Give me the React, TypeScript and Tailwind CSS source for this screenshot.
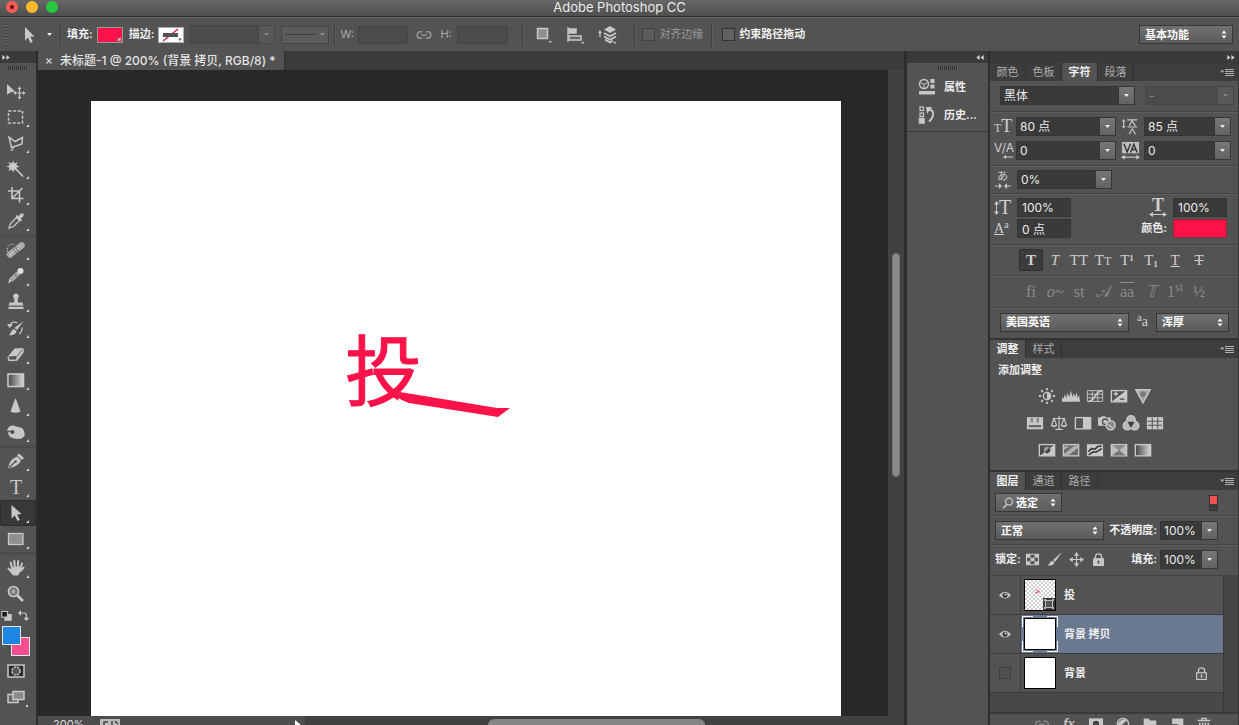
import type { ReactNode } from 'react';
import clsx from 'clsx';

const ICON = '#c8c8c8';

type IconProps = { children: ReactNode; size?: number; className?: string };

// All icons are drawn on a 20x20 grid
const Icon = ({ children, size = 20, className }: IconProps) => (
  <svg
    width={size}
    height={size}
    viewBox="0 0 20 20"
    fill="none"
    stroke={ICON}
    strokeWidth="1.5"
    aria-hidden="true"
    className={clsx('shrink-0', className)}
  >
    {children}
  </svg>
);

const Solid = ({ d }: { d: string }) => <path d={d} fill={ICON} stroke="none" />;

const TOOL_GROUPS: { id: string; label: string; single?: boolean; icon: ReactNode }[][] = [
  [
    {
      id: 'move',
      label: '移动工具',
      single: true,
      icon: (
        <>
          <Solid d="M1 3 L1 14 L4 11.500 L9 10.500 Z" />
          <path d="M13.500 7 V17 M8.500 12 H18.500" strokeWidth="1.200" />
          <Solid d="M13.500 5.500 L15.500 8 H11.500 Z M13.500 18.500 L15.500 16 H11.500 Z M7.500 12 L10 10 V14 Z M19.500 12 L17 10 V14 Z" />
        </>
      ),
    },
    {
      id: 'marquee',
      label: '矩形选框工具',
      icon: <rect x="2.500" y="4" width="14" height="12" strokeDasharray="3 1.700" />,
    },
    {
      id: 'lasso',
      label: '多边形套索工具',
      icon: (
        <>
          <path d="M3 4 L9 8.500 L16.500 4.500 L16 11 L5.500 14.500 Z" />
          <path d="M5.500 14.500 C8 13.500 8 17 4.500 17.500" strokeWidth="1.200" />
        </>
      ),
    },
    {
      id: 'wand',
      label: '魔棒工具',
      icon: (
        <>
          <Solid d="M7 1.500 L8.300 4.500 L11.500 3 L10.300 6.200 L13.500 7.500 L10.300 8.800 L11.500 12 L8.300 10.500 L7 13.500 L5.700 10.500 L2.500 12 L3.700 8.800 L0.500 7.500 L3.700 6.200 L2.500 3 L5.700 4.500 Z" />
          <path d="M10 10 L17 17.500" strokeWidth="1.800" />
        </>
      ),
    },
    {
      id: 'crop',
      label: '裁剪工具',
      icon: <path d="M6 2 V13.500 H17.500 M2 6 H13.500 V17.500 M6 13.500 L16.500 3" strokeWidth="1.600" />,
    },
    {
      id: 'eyedropper',
      label: '吸管工具',
      icon: (
        <>
          <path d="M3 17 L4.500 12.500 L10.500 6.500 L13.500 9.500 L7.500 15.500 Z" strokeWidth="1.300" />
          <Solid d="M9.500 5 L11 4 L12.500 5.200 L14.500 2.800 Q16 1.500 17.300 2.800 Q18.500 4 17.200 5.500 L14.800 7.500 L16 9 L14.800 10.500 Z" />
        </>
      ),
    },
  ],
  [
    {
      id: 'heal',
      label: '污点修复画笔工具',
      icon: (
        <>
          <path d="M2 15 C-1 7 4 2 9 5" strokeWidth="1" strokeDasharray="1.500 1.300" />
          <path d="M4 14.500 L15.500 5.500" strokeWidth="6.500" stroke="#aaaaaa" strokeLinecap="round" />
          <path d="M7.500 9 L11 13.500 M9.500 7.300 L13 12" strokeWidth="1" stroke="#555" />
          <path d="M4 14.500 L15.500 5.500" strokeWidth="1.200" strokeDasharray="1.200 1.800" stroke="#eeeeee" />
        </>
      ),
    },
    {
      id: 'brush',
      label: '画笔工具',
      icon: (
        <>
          <Solid d="M2 17.500 L3.500 12.500 L6 15 Z" />
          <path d="M5 14 L12.500 7" strokeWidth="4.500" stroke="#a8a8a8" />
          <path d="M8.500 8 L12 12" stroke="#555" strokeWidth="0.800" />
          <circle cx="14.500" cy="5" r="3" fill="#e0e0e0" stroke="none" />
        </>
      ),
    },
    {
      id: 'stamp',
      label: '仿制图章工具',
      icon: (
        <Solid d="M10 1.500 C13 1.500 13.500 4.500 12 6.500 C11.500 8 11.500 9 12 10.500 H16.500 L17.500 13.500 H2.500 L3.500 10.500 H8 C8.500 9 8.500 8 8 6.500 C6.500 4.500 7 1.500 10 1.500 Z M2.500 14.800 H17.500 V17 H2.500 Z" />
      ),
    },
    {
      id: 'history-brush',
      label: '历史记录画笔工具',
      icon: (
        <>
          <Solid d="M17.500 3 L11 12 L8.500 10 Z M2.500 17 C5 16.500 4.500 12 8 11 L10.500 13.200 C10 16.500 6 18 2.500 17 Z" />
          <path d="M4 7.500 C5 3.500 9.500 3.500 11.500 5 M16 9.500 C16.500 12 15 15 13 16" strokeWidth="1.300" />
          <Solid d="M1 6 L7 6.500 L3.500 10 Z" />
        </>
      ),
    },
    {
      id: 'eraser',
      label: '橡皮擦工具',
      icon: (
        <>
          <Solid d="M2 12.500 L8.500 4.500 L17 4 L11 12 Z" />
          <path d="M2 12.500 L3 16.500 L11 16 L17 8 V4.500 M11 12.500 V16" strokeWidth="1.300" />
          <Solid d="M11.500 12.500 L17 5 V8.500 L11.500 15.500 Z" />
        </>
      ),
    },
    {
      id: 'gradient',
      label: '渐变工具',
      icon: (
        <>
          <rect x="2" y="4" width="15.500" height="12.500" fill="url(#toolGradient)" strokeWidth="1.600" />
          <defs>
            <linearGradient id="toolGradient">
              <stop offset="0" stopColor="#444" />
              <stop offset="1" stopColor="#d8d8d8" />
            </linearGradient>
          </defs>
        </>
      ),
    },
    { id: 'sharpen', label: '锐化工具', icon: <Solid d="M9 3 Q9.500 2 10 3 L14.500 15.500 Q9.500 18 4.500 15.500 Z" /> },
    {
      id: 'sponge',
      label: '海绵工具',
      icon: (
        <>
          <Solid d="M1 9 Q2 3.500 7 3.500 L16 6 Q19 9 18.500 14 L15.500 16.500 Q8 18 3.500 14.500 Z" />
          <circle cx="6.500" cy="10" r="2" fill="#505050" stroke="none" />
          <path d="M1 9.500 H6" stroke="#505050" />
        </>
      ),
    },
  ],
  [
    {
      id: 'pen',
      label: '钢笔工具',
      icon: (
        <>
          <Solid d="M2 17.500 Q3 8.500 11 5.500 L15 9.500 Q12.500 15.500 2 17.500 Z M11 4.500 L13 2.500 L18 7 L16 9 Z" />
          <path d="M3 16.500 L9 11" stroke="#505050" strokeWidth="1.200" />
          <circle cx="9.500" cy="10.500" r="1.300" fill="#505050" stroke="none" />
        </>
      ),
    },
    { id: 'type', label: '横排文字工具', icon: null },
    { id: 'path-select', label: '路径选择工具', icon: <Solid d="M5.500 2 V15.500 L8.800 12.500 L11.500 18 L13.800 16.800 L11.200 11.500 L15.500 11 Z" /> },
    {
      id: 'rectangle',
      label: '矩形工具',
      icon: <rect x="2.500" y="4.500" width="14.500" height="11" fill="#8f8f8f" strokeWidth="1.300" />,
    },
  ],
  [
    {
      id: 'hand',
      label: '抓手工具',
      icon: (
        <>
          <Solid d="M5 9.500 L14.500 8.500 L15.500 12 L12 17.500 H7 L4.500 13.500 Z" />
          <path
            d="M2.500 10.500 L6.500 15 M6 10 L4.700 4.500 M8.800 9.500 L8.300 2.800 M11.700 9.500 L12.200 3 M14 11 L16 5.500 M15 12.500 L17.500 9.500"
            strokeWidth="2"
            strokeLinecap="round"
          />
        </>
      ),
    },
    {
      id: 'zoom',
      label: '缩放工具',
      single: true,
      icon: (
        <>
          <circle cx="7.500" cy="7.500" r="5" fill="#777" strokeWidth="1.700" />
          <circle cx="7.500" cy="7.500" r="2" fill="#aaa" stroke="none" />
          <path d="M11.500 11.500 L17 17" strokeWidth="2.600" />
        </>
      ),
    },
  ],
];

const ADJUSTMENTS: { id: string; icon: ReactNode }[][] = [
  [
    {
      id: '亮度/对比度',
      icon: (
        <>
          <circle cx="10" cy="10" r="4" />
          <Solid d="M10 6 A4 4 0 0 1 10 14 Z" />
          <path d="M10 1 V3.500 M10 16.500 V19 M1 10 H3.500 M16.500 10 H19 M3.600 3.600 L5.400 5.400 M14.600 14.600 L16.400 16.400 M3.600 16.400 L5.400 14.600 M14.600 5.400 L16.400 3.600" strokeWidth="2" />
        </>
      ),
    },
    { id: '色阶', icon: <Solid d="M0 16.500 V11 L2 13 L3 8 L5 12 L6 6 L8 11 L10 4 L11.500 11 L13 7 L14.500 11 L16 6 L17.500 12 L19 9 L20 16.500 Z" /> },
    {
      id: '曲线',
      icon: (
        <>
          <path d="M1.500 4 H18.500 V16 H1.500 Z M1.500 8 H18.500 M1.500 12 H18.500 M7 4 V16 M13 4 V16" strokeWidth="1" />
          <path d="M3 16 C11 15 9 5 18 4" strokeWidth="1.800" />
        </>
      ),
    },
    {
      id: '曝光度',
      icon: (
        <>
          <rect x="1.500" y="4" width="17" height="12.500" />
          <Solid d="M2 16 L18 4 V16 Z" />
          <path d="M4 7.500 H9 M6.500 5 V10" />
          <path d="M11 13.500 H16" stroke="#4a4a4a" />
        </>
      ),
    },
    {
      id: '自然饱和度',
      icon: (
        <>
          <path d="M2 3 H18 L10 17.500 Z" fill="#a2a2a2" />
          <circle cx="10" cy="8" r="3" fill="#777" stroke="none" />
        </>
      ),
    },
  ],
  [
    {
      id: '色相/饱和度',
      icon: (
        <>
          <Solid d="M1 3.500 H19 V17 H1 Z" />
          <path d="M6.500 4.500 V9.500 M13 4.500 V9.500" stroke="#8a8a8a" strokeWidth="3" />
          <path d="M3 13.500 H17" stroke="#666" strokeWidth="2.500" />
        </>
      ),
    },
    {
      id: '色彩平衡',
      icon: (
        <>
          <path d="M10 2 V16.500 M6 17 H14 M3 5 H17 M4.500 5 L1.500 13 M4.500 5 L7.500 13 M15.500 5 L12.500 13 M15.500 5 L18.500 13" strokeWidth="1.300" />
          <Solid d="M0.500 12.500 H8.500 Q4.500 17 0.500 12.500 Z M11.500 12.500 H19.500 Q15.500 17 11.500 12.500 Z" />
        </>
      ),
    },
    {
      id: '黑白',
      icon: (
        <>
          <rect x="1.500" y="4" width="17" height="12.500" fill="#555" />
          <Solid d="M10 4 H18.500 V16.500 H10 Z" />
        </>
      ),
    },
    {
      id: '照片滤镜',
      icon: (
        <>
          <Solid d="M0 4 H3 L4 2.500 H8 L9 4 H14 V13 H0 Z" />
          <circle cx="8" cy="8.500" r="3" stroke="#505050" />
          <circle cx="14" cy="12.500" r="5" fill="#8a8a8a" strokeWidth="1.600" />
          <path d="M10.500 11 L16.500 15.500" strokeWidth="1.200" />
        </>
      ),
    },
    {
      id: '通道混合器',
      icon: (
        <>
          <circle cx="10" cy="6.500" r="4.700" fill="#b8b8b8" />
          <circle cx="6" cy="13" r="4.700" fill="#b8b8b8" />
          <circle cx="14" cy="13" r="4.700" fill="#b8b8b8" />
          <path d="M6 8.500 L14 8.500 L10 15.500 Z" fill="#3d3d3d" stroke="none" />
        </>
      ),
    },
    {
      id: '颜色查找',
      icon: (
        <>
          <Solid d="M1 3.500 H19 V17 H1 Z" />
          <path d="M2 8 H18 M2 12.500 H18 M7 4.500 V16 M13 4.500 V16" stroke="#555" strokeWidth="1.200" />
        </>
      ),
    },
  ],
  [
    {
      id: '反相',
      icon: (
        <>
          <rect x="1.500" y="4" width="17" height="12.500" fill="#4a4a4a" />
          <Solid d="M2 16.500 L18.500 4 V16.500 Z" />
          <circle cx="10" cy="10" r="3.500" fill="#999" stroke="none" />
          <path d="M7.500 12.500 A3.500 3.500 0 0 0 12.500 7.500 Z" fill="#444" stroke="none" />
        </>
      ),
    },
    {
      id: '色调分离',
      icon: (
        <>
          <rect x="1.500" y="4" width="17" height="12.500" fill="#6c6c6c" />
          <path d="M2 6 H8 L2 10 Z M2 14.500 L14 5 H18 V7.500 L7 16 H2 Z" fill="#b0b0b0" stroke="none" />
        </>
      ),
    },
    {
      id: '阈值',
      icon: (
        <>
          <Solid d="M1 3.500 H19 V17 H1 Z" />
          <path d="M2.500 12 L6 8.500 L10 9 L13 6 L17.500 5.500 M3 15.500 L8 12 L11 12.500 L17.500 8.500" stroke="#3a3a3a" strokeWidth="1.800" />
        </>
      ),
    },
    {
      id: '可选颜色',
      icon: (
        <>
          <rect x="1.500" y="4" width="17" height="12.500" fill="#bdbdbd" />
          <path d="M2.500 4.500 L10 10.500 L17.500 4.500 Z" fill="#8a8a8a" stroke="none" />
          <path d="M2.500 16 L10 10 L17.500 16 Z" fill="#777" stroke="none" />
        </>
      ),
    },
    {
      id: '渐变映射',
      icon: <rect x="1.500" y="4" width="17" height="12.500" fill="url(#toolGradient)" />,
    },
  ],
];

const LAYERS = [
  { name: '投', visible: true, shape: true },
  { name: '背景 拷贝', visible: true, selected: true },
  { name: '背景', visible: false, locked: true },
];

const TypeTool = () => (
  <span className="w-5 shrink-0 text-center font-['Liberation_Serif',serif] text-xl leading-5 text-[#c8c8c8]">T</span>
);

const DownArrow = () => (
  <svg width="5" height="3" viewBox="0 0 5 3" fill="currentColor" aria-hidden="true" className="shrink-0">
    <path d="M0 0 H5 L2.500 3 Z" />
  </svg>
);

const UpDown = () => (
  <svg width="6" height="9" viewBox="0 0 6 9" fill="currentColor" aria-hidden="true" className="pointer-events-none shrink-0">
    <path d="M0.500 3.500 L3 0.500 L5.500 3.500 Z M0.500 5.500 H5.500 L3 8.500 Z" />
  </svg>
);

// Dark value field with a separate arrow button
const Combo = ({ label, value, className, disabled }: { label: string; value: string; className?: string; disabled?: boolean }) => (
  <div
    className={clsx(
      'flex h-[19px] border',
      disabled ? 'border-[#474747] bg-[#4b4b4b] text-[#858585]' : 'border-[#353535] bg-[#3a3a3a] text-[#ececec]',
      className,
    )}
  >
    <select aria-label={label} disabled={disabled} className="min-w-0 flex-1 appearance-none bg-transparent pl-[3px] text-xs leading-4 outline-none">
      <option>{value}</option>
    </select>
    <span
      className={clsx(
        'flex w-4 shrink-0 items-center justify-center border-l',
        disabled ? 'border-[#474747] bg-[#585858]' : 'border-[#353535] bg-linear-to-b from-[#777] to-[#626262]',
      )}
    >
      <DownArrow />
    </span>
  </div>
);

// Raised pop-up button
const Popup = ({ label, value, className, icon }: { label: string; value: string; className?: string; icon?: ReactNode }) => (
  <div
    className={clsx(
      'flex h-[19px] items-center border border-[#373737] bg-linear-to-b from-[#707070] to-[#5c5c5c] px-[5px] text-white',
      className,
    )}
  >
    {icon}
    <select aria-label={label} className="min-w-0 flex-1 appearance-none bg-transparent text-[11px] leading-4 font-bold outline-none">
      <option>{value}</option>
    </select>
    <UpDown />
  </div>
);

const Field = ({ label, value }: { label: string; value: string }) => (
  <input
    aria-label={label}
    defaultValue={value}
    className="h-[19px] w-[54px] border border-[#353535] bg-[#3a3a3a] px-1 text-xs text-[#ececec] outline-none"
  />
);

const Divider = () => <div className="h-[22px] w-px shrink-0 bg-[#404040] shadow-[1px_0_0_#5d5d5d]" />;

const Grip = () => (
  <div className="mx-auto mt-[3px] h-[4px] w-5 bg-[repeating-linear-gradient(90deg,#333_0_1px,#5a5a5a_1px_2px)]" />
);

const Chevrons = ({ left }: { left?: boolean }) => (
  <svg width="8" height="5" viewBox="0 0 9 6" fill="#d0d0d0" aria-hidden="true">
    <path d={left ? 'M4 0 V6 L0 3 Z M9 0 V6 L5 3 Z' : 'M0 0 V6 L4 3 Z M5 0 V6 L9 3 Z'} />
  </svg>
);

const PanelTabs = ({ tabs, active }: { tabs: string[]; active: string }) => (
  <div role="tablist" className="flex h-[18px] items-stretch bg-[#3d3d3d]">
    {tabs.map((tab) => (
      <button
        key={tab}
        role="tab"
        aria-selected={tab === active}
        className={clsx(
          'w-9 border-r border-[#303030] text-[11px] leading-[18px]',
          tab === active ? 'bg-[#535353] font-bold text-[#f0f0f0]' : 'text-[#adadad]',
        )}
      >
        {tab}
      </button>
    ))}
    <button aria-label="面板菜单" className="mr-1 ml-auto">
      <svg width="14" height="9" viewBox="0 0 14 9" stroke="#b0b0b0" aria-hidden="true">
        <path d="M5 1.500 H14 M5 3.500 H14 M5 5.500 H14 M5 7.500 H14" strokeWidth="1" />
        <path d="M0 2.500 H4.500 L2.200 5 Z" fill="#b0b0b0" stroke="none" />
      </svg>
    </button>
  </div>
);

const TitleBar = () => (
  <header className="relative flex h-[17px] items-center border-b border-[#2e2e2e] bg-linear-to-b from-[#666] to-[#4f4f4f] pb-[3px] pl-[6px]">
    <div className="flex gap-2">
      <button aria-label="关闭" className="flex size-3 items-center justify-center rounded-full bg-[#fc5b57]">
        <span className="size-1 rounded-full bg-[#5c0a0a]" />
      </button>
      <button aria-label="最小化" className="size-3 rounded-full bg-[#fdb92e]" />
      <button aria-label="缩放" className="size-3 rounded-full bg-[#28c940]" />
    </div>
    <h1 className="absolute inset-x-0 top-0 text-center text-[13px] leading-[14px] text-[#ececec]">Adobe Photoshop CC</h1>
  </header>
);

const OptionsBar = () => (
  <div className="flex h-[34px] items-center border-t border-[#6a6a6a] bg-[#535353] pr-[6px] pl-1 text-[11px] font-bold text-[#ededed]">
    <span className="h-[22px] w-[3px] bg-[repeating-linear-gradient(180deg,#3d3d3d_0_1px,#5e5e5e_1px_3px)]" />
    <button aria-label="路径选择工具" className="ml-3 flex items-center gap-2">
      <Icon>
        <Solid d="M6 2 V15.500 L9 12.500 L11.500 18 L13.800 16.800 L11.300 11.800 L15.500 11.500 Z" />
      </Icon>
      <DownArrow />
    </button>
    <div className="ml-2 flex items-center gap-1.5">
      <Divider />
      <span>填充:</span>
    </div>
    <button aria-label="填充颜色" className="ml-1 h-4 w-[26px] border border-[#999] bg-[#fb1248]">
      <svg width="24" height="14" viewBox="0 0 24 14" aria-hidden="true">
        <path d="M18 9 H24 V14 H18 Z" fill="#c9405f" />
        <path d="M19 12.500 H22.500 V9.500 Z" fill="#f0c8d0" />
      </svg>
    </button>
    <span className="ml-1.5">描边:</span>
    <button aria-label="描边颜色" className="ml-1 h-4 w-[26px] border border-[#aaa] bg-white">
      <svg width="24" height="14" viewBox="0 0 24 14" aria-hidden="true">
        <path d="M4 13 L19 1" stroke="#d02340" strokeWidth="1.500" />
        <path d="M4 5 H19 V9 H4 Z" fill="#535353" />
        <path d="M19 10.500 H23 L21 13 Z" fill="#666" />
      </svg>
    </button>
    <Combo label="描边宽度" value="" disabled className="ml-1.5 w-[85px]" />
    <button aria-label="描边类型" className="ml-1.5 flex h-[18px] w-12 items-center gap-1 border border-[#444] bg-[#5b5b5b] px-[3px] text-[#8c8c8c]">
      <span className="h-px flex-1 bg-[#3f3f3f]" />
      <DownArrow />
    </button>
    <div className="ml-[5px] flex items-center gap-[5px] font-normal text-[#aaa]">
      <Divider />
      <label htmlFor="shape-w" className="w-[13px] text-[11px]">W:</label>
      <input id="shape-w" disabled className="h-[18px] w-[50px] border border-[#444] bg-[#4b4b4b]" />
    </div>
    <Icon size={16} className="ml-2">
      <path d="M8 6 H5.500 A4 4 0 0 0 5.500 14 H8 M12 6 H14.500 A4 4 0 0 1 14.500 14 H12 M6.500 10 H13.500" stroke="#999" strokeWidth="1.800" />
    </Icon>
    <label htmlFor="shape-h" className="ml-2 w-[13px] text-[11px] font-normal text-[#aaa]">H:</label>
    <input id="shape-h" disabled className="mr-3.5 ml-1 h-[18px] w-[51px] border border-[#444] bg-[#4b4b4b]" />
    <Divider />
    <div className="mr-4 ml-[11px] flex gap-3">
      <button aria-label="路径操作">
        <Icon>
          <rect x="3.500" y="3.500" width="10" height="10" fill="#8f8f8f" />
          <Solid d="M14.500 16 H18 L16.200 18 Z" />
        </Icon>
      </button>
      <button aria-label="路径对齐方式">
        <Icon>
          <path d="M2 2 V17" strokeWidth="1.400" />
          <path d="M3 4 H10 V8 H3 Z" fill={ICON} />
          <path d="M3 11 H15 V15 H3 Z" fill="#666" />
          <Solid d="M15 17 H18.500 L16.800 19 Z" />
        </Icon>
      </button>
      <button aria-label="路径排列方式">
        <Icon>
          <Solid d="M12 1 L18 4.500 L12 8 L6 4.500 Z" />
          <path d="M6 8 L12 11.200 L18 8 M6 11.500 L12 14.700 L18 11.500 M7 14.500 L12 17.500 L15 15.800" strokeWidth="1.800" />
          <path d="M2 12 V7" strokeWidth="1.300" />
          <Solid d="M0 8 H4 L2 5 Z M15 17 H18.500 L16.800 19 Z" />
        </Icon>
      </button>
    </div>
    <Divider />
    <label className="mr-2 ml-[7px] flex items-center gap-1 font-normal text-[#9a9a9a]">
      <input type="checkbox" disabled className="size-[13px] appearance-none border border-[#3f3f3f] bg-[#5c5c5c]" />
      对齐边缘
    </label>
    <Divider />
    <label className="ml-2.5 flex items-center gap-1">
      <input type="checkbox" className="size-[13px] appearance-none border border-[#333] bg-[#616161]" />
      约束路径拖动
    </label>
    <Popup label="工作区" value="基本功能" className="ml-auto w-[94px]" />
  </div>
);

const Toolbar = () => (
  <aside className="flex w-9 shrink-0 flex-col bg-[#535353]">
    <div className="flex h-[12px] items-center bg-[#3a3a3a] pl-[2px]">
      <Chevrons />
    </div>
    <div className="h-[15px]">
      <Grip />
    </div>
    {TOOL_GROUPS.map((group, i) => (
      <div key={i} className={clsx(i > 0 && 'border-t-[3px] border-double border-[#474747]')}>
        {group.map((tool) => (
          <button
            key={tool.id}
            aria-label={tool.label}
            className={clsx(
              'flex h-[26px] w-full items-center rounded-xs pl-[6px]',
              tool.id === 'path-select' && 'bg-[#383838] shadow-[inset_0_0_0_1px_#2c2c2c]',
            )}
          >
            {tool.icon ? <Icon>{tool.icon}</Icon> : <TypeTool />}
            {!tool.single && (
              <svg width="3" height="3" viewBox="0 0 3 3" className="mb-[3px] self-end" aria-hidden="true">
                <path d="M3 0 V3 H0 Z" fill="#d0d0d0" />
              </svg>
            )}
          </button>
        ))}
      </div>
    ))}
    <div className="flex h-[17px] items-center gap-1">
      <button aria-label="默认前景色和背景色">
        <Icon size={14}>
          <rect x="7" y="8" width="9" height="8" fill={ICON} />
          <rect x="2.500" y="3.500" width="8" height="8" fill="#1c1c1c" />
        </Icon>
      </button>
      <button aria-label="切换前景色和背景色">
        <Icon size={12}>
          <path d="M4 5 H10 Q14 5 14 9 V15" strokeWidth="2" />
          <Solid d="M5 0 V10 L0 5 Z M9 13 H19 L14 18.500 Z" />
        </Icon>
      </button>
    </div>
    <div className="grid h-[34px] w-[30px] shrink-0 self-start pt-[2px] pb-[2px] pl-[2px]">
      <button aria-label="背景色" className="col-start-1 row-start-1 size-[19px] self-end justify-self-end border border-[#e8e8e8] bg-[#f4508f]" />
      <button aria-label="前景色" className="z-10 col-start-1 row-start-1 size-[19px] border border-[#e8e8e8] bg-[#1c86e2]" />
    </div>
    <button aria-label="以快速蒙版模式编辑" className="flex h-[26px] items-center pl-[6px]">
      <Icon>
        <rect x="2" y="4" width="16" height="12" fill="#2d2d2d" />
        <circle cx="10" cy="10" r="4" fill="#555" strokeDasharray="2.200 1" />
      </Icon>
    </button>
    <button aria-label="更改屏幕模式" className="flex h-[26px] items-center pl-[6px]">
      <Icon>
        <rect x="2" y="7.500" width="10" height="8" fill="#666" />
        <rect x="7" y="4.500" width="11" height="8" fill="#8a8a8a" />
      </Icon>
      <span className="mb-[3px] size-[2px] self-end bg-[#d0d0d0]" />
    </button>
  </aside>
);

const Canvas = () => (
  <div className="flex min-h-0 flex-1 bg-[#282828]">
    <div className="flex min-w-0 flex-1 pt-[31px] pr-[47px] pl-[53px]">
      <div className="relative flex-1 bg-white">
        {/* Artwork: glyph with its last stroke pulled out to the right */}
        <svg width="180" height="140" viewBox="0 0 180 140" fill="#fb1248" className="absolute top-[196px] left-[250px]" role="img" aria-label="投">
          <text x="4" y="103" fontSize="77" fontWeight="400" stroke="#fb1248" strokeWidth="1" fontFamily="'Noto Sans CJK SC', sans-serif">投</text>
          <path d="M57 101 L67 105 L84 108 V117 H60 Z" fill="#fff" />
          <path d="M59 95 L156 111 H169 L157 120 L68 106 Q61 104 55 99 Z" />
        </svg>
      </div>
    </div>
    <div className="w-4 shrink-0 bg-[#414141] px-1 pt-[183px]">
      <div className="h-[224px] rounded-full border border-[#777] bg-[#8a8a8a]" />
    </div>
  </div>
);

const DocumentArea = () => (
  <main className="flex min-w-0 flex-1 flex-col border-r-3 border-l-2 border-[#2d2d2d] bg-[#3b3b3b]">
    <div className="flex h-[19px] shrink-0">
      <div className="flex items-center gap-[7px] border-r border-[#303030] bg-[#535353] pr-2 pl-[7px] text-[#e4e4e4]">
        <button aria-label="关闭文档">
          <svg width="8" height="8" viewBox="0 0 8 8" stroke="#d0d0d0" aria-hidden="true">
            <path d="M1.500 1.500 L6.500 6.500 M6.500 1.500 L1.500 6.500" strokeWidth="1.300" />
          </svg>
        </button>
        <span className="text-xs leading-[18px] font-medium whitespace-nowrap">
          未标题-1 @ 200% (背景 拷贝, RGB/8) *
        </span>
      </div>
    </div>
    <Canvas />
    <div className="flex h-[9px] shrink-0 items-start overflow-hidden bg-[#414141]">
      <div className="flex w-[267px] items-start bg-[#4d4d4d] pr-1 pl-[15px] text-[#dedede]">
        <span className="text-[11px] leading-4">200%</span>
        <svg width="20" height="12" viewBox="0 0 20 12" className="mt-[3px] ml-4" aria-hidden="true">
          <rect width="20" height="12" rx="1" fill="#bbb" />
          <path d="M4 8 V3 H8 M12 2 V8 M15 2 L18 5" stroke="#444" strokeWidth="1.500" fill="none" />
        </svg>
        <svg width="6" height="10" viewBox="0 0 6 10" className="mt-1 ml-auto" aria-hidden="true">
          <path d="M0 0 L6 5 L0 10 Z" fill="#fff" />
        </svg>
      </div>
      <div className="mt-[3px] ml-[183px] h-2 w-[217px] rounded-t-md bg-[#858585]" />
    </div>
  </main>
);

const SideDock = () => (
  <aside className="flex w-[83px] shrink-0 flex-col border-r-2 border-[#2d2d2d] bg-[#535353]">
    <div className="flex h-[12px] items-center justify-end bg-[#3a3a3a] pr-1">
      <Chevrons left />
    </div>
    <div className="border-b border-[#383838] pb-[2px] text-[11px] font-bold text-[#ececec]">
      <Grip />
      <button className="mt-[3px] flex h-7 items-center gap-[7px] pl-2.5">
        <Icon>
          <circle cx="7" cy="7" r="4.500" />
          <path d="M3.500 5.500 L7 7.500 L10.500 5.500 M7 7.500 V11" strokeWidth="1" />
          <Solid d="M13.500 2 H17.500 V6 H13.500 Z M13.500 7.500 H17.500 V11.500 H13.500 Z M2 14 H18 V17.500 H2 Z" />
        </Icon>
        属性
      </button>
      <button className="flex h-7 items-center gap-[7px] pl-2.5">
        <Icon>
          <rect x="3" y="2" width="3.500" height="3.500" strokeWidth="1.200" />
          <rect x="3" y="8" width="3.500" height="3.500" strokeWidth="1.200" />
          <path d="M2.500 13.500 H7 V18 H2.500 Z" fill={ICON} />
          <path d="M11 4 Q17 5 16 10 Q15.500 14 12 16.500" strokeWidth="2" />
          <Solid d="M9 2 H15 L10 9 Z" />
        </Icon>
        历史...
      </button>
    </div>
  </aside>
);

const LinedRow = ({ children, className }: { children: ReactNode; className?: string }) => (
  <div className={clsx('border-b border-[#424242] shadow-[0_1px_0_#5e5e5e]', className)}>{children}</div>
);

const GLYPH = "font-['Liberation_Serif',serif] text-[#cfcfcf]";

// Type style toggles, top row
const TYPE_STYLES: { label: string; glyph: ReactNode; on?: boolean }[] = [
  { label: '仿粗体', glyph: <b>T</b>, on: true },
  { label: '仿斜体', glyph: <i>T</i> },
  { label: '全部大写字母', glyph: 'TT' },
  { label: '小型大写字母', glyph: <>T<span className="text-xs">T</span></> },
  { label: '上标', glyph: <>T<sup className="text-[9px] font-bold">1</sup></> },
  { label: '下标', glyph: <>T<sub className="text-[9px] font-bold">1</sub></> },
  { label: '下划线', glyph: <span className="underline">T</span> },
  { label: '删除线', glyph: <span className="line-through">T</span> },
];

const OPEN_TYPE: { label: string; glyph: ReactNode }[] = [
  { label: '标准连字', glyph: 'fi' },
  { label: '上下文替代字', glyph: <i>o~</i> },
  { label: '自由连字', glyph: 'st' },
  { label: '花饰字', glyph: '𝒜' },
  { label: '文体替代字', glyph: <span className="overline">aa</span> },
  { label: '标题替代字', glyph: <i>𝕋</i> },
  { label: '序数字', glyph: <>1<sup className="text-xs">st</sup></> },
  { label: '分数字', glyph: '½' },
];

const CharacterPanel = () => (
  <section className="text-[#ececec]">
    <PanelTabs tabs={['颜色', '色板', '字符', '段落']} active="字符" />
    <LinedRow className="flex gap-2.5 pt-[5px] pr-1 pb-1.5 pl-2.5">
      <Combo label="字体" value="黑体" className="w-[135px]" />
      <Combo label="字体样式" value="-" disabled className="flex-1" />
    </LinedRow>
    <LinedRow className="grid grid-cols-[22px_100px_28px_1fr] items-center gap-y-[5px] pt-[5px] pr-[7px] pb-[5px] pl-1">
      <span className={clsx(GLYPH, 'h-[19px] text-lg leading-[19px]')}>
        <span className="text-xs">T</span>T
      </span>
      <Combo label="字体大小" value="80 点" />
      <Icon size={18} className="justify-self-center">
        <path d="M7 2 H18 M7 10 H18 M3 3 V10" strokeWidth="1.300" />
        <path d="M9 9 L12.500 3 L16 9 M9 18 L12.500 12 L16 18" strokeWidth="1.300" />
        <Solid d="M1 4 H5 L3 1 Z M1 9 H5 L3 12 Z" />
      </Icon>
      <Combo label="行距" value="85 点" />
      <div className="flex h-[19px] flex-col text-[#cfcfcf]">
        <span className="text-xs leading-[14px]">V/A</span>
        <svg width="20" height="4" viewBox="0 0 20 4" aria-hidden="true">
          <path d="M10 2 H19" stroke={ICON} />
          <path d="M9 2 L12 0 V4 Z" fill={ICON} />
        </svg>
      </div>
      <Combo label="字距微调" value="0" />
      <Icon size={19} className="justify-self-center">
        <path d="M1 1 H19 V13 H1 Z" fill="#bdbdbd" stroke="none" />
        <path d="M3 3 L6.500 11.500 L10 3 M10 12 L13.500 3.500 L17 12 M11.500 9 H15.500" stroke="#333" />
        <path d="M2 17 H18" strokeWidth="1.200" />
        <Solid d="M0 17 L4 14.500 V19.500 Z M20 17 L16 14.500 V19.500 Z" />
      </Icon>
      <Combo label="字距调整" value="0" />
    </LinedRow>
    <LinedRow className="flex items-center pt-1 pb-1 pl-1">
      <div className="flex w-[23px] flex-col items-start text-[#cfcfcf]">
        <span className="px-[3px] text-[11px] leading-[13px]">あ</span>
        <svg width="18" height="6" viewBox="0 0 18 6" fill={ICON} aria-hidden="true">
          <path d="M1 2.500 H5 V0 L8 3 L5 6 V3.500 H1 Z M17 2.500 H13 V0 L10 3 L13 6 V3.500 H17 Z" />
        </svg>
      </div>
      <Combo label="比例间距" value="0%" className="w-[95px]" />
    </LinedRow>
    <LinedRow className="grid grid-cols-[23px_54px_1fr_auto_54px] items-center gap-y-[2px] pt-1 pr-[11px] pb-1.5 pl-1">
      <span className={clsx(GLYPH, 'flex h-[19px] items-center text-xl leading-[19px]')}>
        <svg width="5" height="14" viewBox="0 0 5 14" fill={ICON} aria-hidden="true">
          <path d="M2.500 0 L5 3.500 H3 V10.500 H5 L2.500 14 L0 10.500 H2 V3.500 H0 Z" />
        </svg>
        T
      </span>
      <Field label="垂直缩放" value="100%" />
      <span />
      <div className="mr-[5px] flex h-[19px] w-5 flex-col items-center justify-self-end">
        <span className={clsx(GLYPH, 'text-lg leading-[14px] font-bold')}>T</span>
        <svg width="18" height="5" viewBox="0 0 18 5" aria-hidden="true">
          <path d="M2 2.500 H16" stroke={ICON} />
          <path d="M0 2.500 L4 0 V5 Z M18 2.500 L14 0 V5 Z" fill={ICON} />
        </svg>
      </div>
      <Field label="水平缩放" value="100%" />
      <span className={clsx(GLYPH, 'h-[19px] text-sm leading-[19px]')}>
        <span className="underline">A</span>
        <sup className="text-[10px]">a</sup>
      </span>
      <Field label="基线偏移" value="0 点" />
      <span />
      <label htmlFor="char-color" className="mr-1.5 text-[11px] leading-[19px] font-bold">颜色:</label>
      <button id="char-color" aria-label="文本颜色" className="h-[19px] border border-[#8a2a42] bg-[#fb1248]" />
    </LinedRow>
    <LinedRow className="flex items-center py-1 pl-[29px]">
      {TYPE_STYLES.map(({ label, glyph, on }) => (
        <button
          key={label}
          aria-label={label}
          className={clsx(GLYPH, 'h-[22px] w-6 rounded-xs text-[15px] leading-5', on && 'border border-[#303030] bg-[#3c3c3c]')}
        >
          {glyph}
        </button>
      ))}
    </LinedRow>
    <LinedRow className="flex items-center py-[5px] pl-[29px]">
      {OPEN_TYPE.map(({ label, glyph }) => (
        <button key={label} aria-label={label} disabled className="h-[21px] w-6 font-['Liberation_Serif','DejaVu_Serif',serif] text-base leading-5 text-[#8b8b8b]">
          {glyph}
        </button>
      ))}
    </LinedRow>
    <div className="flex items-center pt-1 pr-[9px] pb-1.5 pl-[10px]">
      <Popup label="语言" value="美国英语" className="w-[129px]" />
      <span className={clsx(GLYPH, 'w-[27px] text-center text-sm leading-5')}>
        <sup className="text-[11px]">a</sup>a
      </span>
      <Popup label="消除锯齿" value="浑厚" className="flex-1" />
    </div>
  </section>
);

const AdjustmentsPanel = () => (
  <section className="border-t-2 border-[#333]">
    <PanelTabs tabs={['调整', '样式']} active="调整" />
    <h2 className="pt-1 pl-2 text-[11px] leading-4 font-bold text-[#ececec]">添加调整</h2>
    <div className="flex flex-col gap-2 pt-2 pb-[11px]">
      {ADJUSTMENTS.map((row, i) => (
        <div key={i} className={clsx('flex gap-1.5', i === 1 ? 'pl-9' : 'pl-12')}>
          {row.map((adj) => (
            <button key={adj.id} aria-label={adj.id} className="flex h-[19px] items-center">
              <Icon size={18}>{adj.icon}</Icon>
            </button>
          ))}
        </div>
      ))}
    </div>
  </section>
);

const Eye = () => (
  <svg width="12" height="10" viewBox="0 0 12 10" aria-hidden="true">
    <path d="M0 5.500 Q6 -2 12 5.500 Q6 11.500 0 5.500 Z" fill="#c4c4c4" />
    <circle cx="6" cy="5.200" r="2.500" fill="#3a3a3a" />
    <circle cx="6.500" cy="4.500" r="1" fill="#ddd" />
  </svg>
);

const Lock = ({ open }: { open?: boolean }) => (
  <Icon size={15}>
    <path d="M6 9 V6 Q6 2.500 10 2.500 Q14 2.500 14 6 V9" strokeWidth="1.800" />
    <rect x="3.500" y="9" width="13" height="9" fill={open ? '#5c5c5c' : ICON} />
    <path d="M10 11.500 V15.500" strokeWidth="2" stroke={open ? ICON : '#444'} />
  </Icon>
);

const LayersPanel = () => (
  <section className="flex min-h-0 flex-1 flex-col border-t-2 border-[#333] text-[#f0f0f0]">
    <PanelTabs tabs={['图层', '通道', '路径']} active="图层" />
    <LinedRow className="flex items-center justify-between pt-[3px] pr-[20px] pb-[3px] pl-[5px]">
      <Popup
        label="滤镜类型"
        value="选定"
        className="w-[67px]"
        icon={
          <Icon size={14} className="mr-px">
            <circle cx="11.500" cy="8" r="5" strokeWidth="1.800" />
            <path d="M8 12 L3 17.500" strokeWidth="2.200" />
          </Icon>
        }
      />
      <button aria-label="打开或关闭图层过滤" className="flex h-4 w-[9px] flex-col border border-[#333] bg-[#3c3c3c]">
        <span className="h-2 w-full bg-[#f25050]" />
      </button>
    </LinedRow>
    <LinedRow className="flex items-center pt-[5px] pr-[20px] pb-1 pl-[5px]">
      <Popup label="混合模式" value="正常" className="flex-1" />
      <span className="mr-[3px] ml-[5px] text-[11px] font-bold">不透明度:</span>
      <Combo label="不透明度" value="100%" className="w-[58px]" />
    </LinedRow>
    <LinedRow className="flex items-center pt-[5px] pr-[20px] pb-1.5 pl-[5px]">
      <span className="text-[11px] font-bold">锁定:</span>
      <div className="ml-1 flex items-center gap-[7px]">
        <button aria-label="锁定透明像素">
          <Icon size={15}>
            <path d="M2 3 H18 V17 H2 Z" fill="#555" />
            <Solid d="M2 3 H7.300 V7.700 H2 Z M12.700 3 H18 V7.700 H12.700 Z M7.300 7.700 H12.700 V12.300 H7.300 Z M2 12.300 H7.300 V17 H2 Z M12.700 12.300 H18 V17 H12.700 Z" />
          </Icon>
        </button>
        <button aria-label="锁定图像像素">
          <Icon size={15}>
            <Solid d="M20 0 L11 13 L8 10.500 Z M0 17.500 C4 17 3 12.500 7 11.500 L10 14 C9 18 4 19 0 17.500 Z" />
          </Icon>
        </button>
        <button aria-label="锁定位置">
          <Icon size={15}>
            <path d="M10 2 V18 M2 10 H18" />
            <Solid d="M10 0 L13.500 5 H6.500 Z M10 20 L13.500 15 H6.500 Z M0 10 L5 6.500 V13.500 Z M20 10 L15 6.500 V13.500 Z" />
          </Icon>
        </button>
        <button aria-label="锁定全部">
          <Lock />
        </button>
      </div>
      <span className="mr-[3px] ml-auto text-[11px] font-bold">填充:</span>
      <Combo label="填充" value="100%" className="w-[58px]" />
    </LinedRow>
    <div className="flex min-h-0 flex-1">
      <ul className="flex-1 bg-[#484848]">
        {LAYERS.map((layer) => (
          <li key={layer.name} className={clsx('flex h-[39px] items-center border-b border-[#3c3c3c]', layer.selected ? 'bg-[#6a7990]' : 'bg-[#535353]')}>
            <button aria-label="切换图层可见性" className="flex h-full w-[31px] shrink-0 items-center justify-center border-r border-[#404040] bg-[#535353]">
              {layer.visible ? <Eye /> : <span className="size-3 border border-[#3f3f3f] bg-[#505050]" />}
            </button>
            <div className="relative ml-px flex size-9 shrink-0 items-center justify-center">
              {layer.selected && (
                <svg width="36" height="36" viewBox="0 0 36 36" fill="none" stroke="#fff" aria-hidden="true" className="absolute inset-0">
                  <path d="M11 0.500 H0.500 V11 M25 0.500 H35.500 V11 M35.500 25 V35.500 H25 M11 35.500 H0.500 V25" />
                </svg>
              )}
              <div
                className={clsx(
                  'flex size-8 shrink-0 items-end justify-end border border-black',
                  layer.shape ? 'bg-[repeating-conic-gradient(#cfcfcf_0_25%,#fff_0_50%)] bg-size-[4px_4px]' : 'bg-white',
                )}
              >
                {layer.shape && (
                  <svg width="30" height="30" viewBox="0 0 30 30" aria-hidden="true">
                    <path d="M11 10 L13 11 M10 13 L15 11.500" stroke="#f24468" />
                    <rect x="18" y="18" width="12" height="12" fill="#3a3a3a" />
                    <rect x="20.500" y="20.500" width="7" height="7" fill="#555" stroke="#bbb" />
                    <path d="M19 19 h2 v2 h-2 Z M27 19 h2 v2 h-2 Z M19 27 h2 v2 h-2 Z M27 27 h2 v2 h-2 Z" fill="#bbb" />
                  </svg>
                )}
              </div>
            </div>
            <span className="ml-1.5 flex-1 text-[11px] font-bold">{layer.name}</span>
            {layer.locked && (
              <span className="mr-[14px]">
                <Lock open />
              </span>
            )}
          </li>
        ))}
      </ul>
      <div className="w-[15px] border-l border-[#383838] bg-[#444]" />
    </div>
    <footer className="flex h-[13px] shrink-0 items-start gap-[13px] overflow-hidden border-t-2 border-[#3a3a3a] pt-[3px] pl-[45px]">
      <button aria-label="链接图层">
        <Icon size={14}>
          <path d="M8 6 H5 A4 4 0 0 0 5 14 H8 M12 6 H15 A4 4 0 0 1 15 14 H12 M6 10 H14" stroke="#888" strokeWidth="2" />
        </Icon>
      </button>
      <button aria-label="添加图层样式" className="w-[14px] font-['Liberation_Serif',serif] text-sm leading-[14px] font-bold text-[#c8c8c8] italic">
        fx
      </button>
      <button aria-label="添加图层蒙版">
        <Icon size={14}>
          <Solid d="M0 2 H20 V18 H0 Z" />
          <circle cx="10" cy="10" r="4.500" fill="#444" stroke="none" />
        </Icon>
      </button>
      <button aria-label="创建新的填充或调整图层">
        <Icon size={14}>
          <circle cx="10" cy="10" r="8" strokeWidth="2" />
          <Solid d="M15.500 4.500 A8 8 0 0 0 4.500 15.500 Z" />
        </Icon>
      </button>
      <button aria-label="创建新组">
        <Icon size={14}>
          <Solid d="M1 2 H8 L10 5 H19 V18 H1 Z" />
        </Icon>
      </button>
      <button aria-label="创建新图层">
        <Icon size={14}>
          <Solid d="M3 2 H19 V18 H11 V10 H3 Z" />
        </Icon>
      </button>
      <button aria-label="删除图层">
        <Icon size={14}>
          <path d="M1 5 H19 M7 4.500 V2 H13 V4.500" strokeWidth="2" />
          <path d="M4 8 V18 H16 V8 M8 8 V18 M12 8 V18" strokeWidth="2" />
        </Icon>
      </button>
    </footer>
  </section>
);

const App = () => (
  <div className="flex h-screen flex-col overflow-hidden bg-[#535353] font-['Inter','Noto_Sans_CJK_SC',sans-serif]">
    <TitleBar />
    <OptionsBar />
    <div className="flex min-h-0 flex-1 overflow-hidden">
      <Toolbar />
      <DocumentArea />
      <SideDock />
      <aside className="flex w-[249px] shrink-0 flex-col border-r border-[#333]">
        <div className="flex h-[12px] shrink-0 items-center justify-end bg-[#3a3a3a] pr-[3px]">
          <Chevrons />
        </div>
        <CharacterPanel />
        <AdjustmentsPanel />
        <LayersPanel />
      </aside>
    </div>
  </div>
);

export default App;
